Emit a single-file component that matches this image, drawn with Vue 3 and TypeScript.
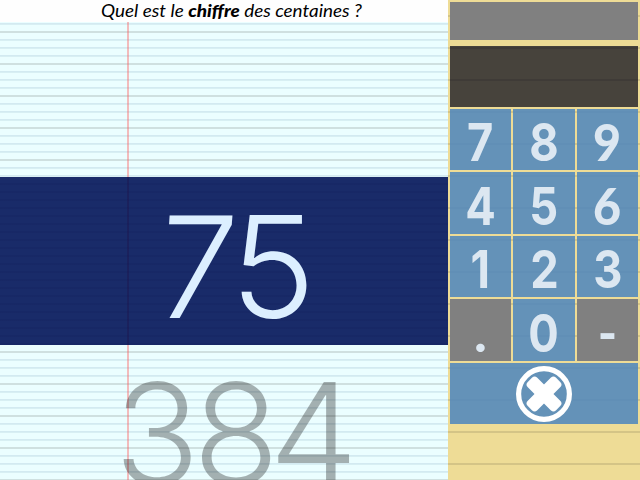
<script setup lang="ts">
interface Glyph { char: string; x: number; stretch: number; slant: number }
interface Key { label: string; disabled?: boolean; tailed?: boolean }

const current: Glyph[] = [
  { char: '7', x: 194, stretch: 0.98, slant: -4 },
  { char: '5', x: 273, stretch: 1.02, slant: 0 },
]
const upcoming: Glyph[] = [
  { char: '3', x: 157, stretch: 1, slant: 0 },
  { char: '8', x: 236, stretch: 1, slant: 0 },
  { char: '4', x: 313.5, stretch: 1, slant: 0 },
]
const keys: Key[] = [
  { label: '7' }, { label: '8' }, { label: '9', tailed: true },
  { label: '4' }, { label: '5' }, { label: '6', tailed: true },
  { label: '1' }, { label: '2' }, { label: '3' },
  { label: '.', disabled: true }, { label: '0' }, { label: '-', disabled: true },
]

function place(g: Glyph, baseline: number): string {
  return `translate(${g.x} ${baseline}) skewX(${g.slant}) scale(${g.stretch} 1)`
}
</script>

<template>
  <main class="game">
    <section class="sheet">
      <header class="question">
        <svg width="448" height="22">
          <text x="101" y="17" textLength="261" lengthAdjust="spacingAndGlyphs">Quel est le <tspan class="strong">chiffre</tspan> des centaines ?</text>
        </svg>
      </header>
      <div class="paper"></div>
      <div class="band">
        <svg width="448" height="168">
          <text v-for="g in current" :key="g.char" :transform="place(g, 140.5)">{{ g.char }}</text>
        </svg>
      </div>
      <div class="next">
        <svg width="448" height="135">
          <text v-for="g in upcoming" :key="g.char" :transform="place(g, 140)">{{ g.char }}</text>
        </svg>
      </div>
    </section>
    <aside class="panel">
      <div class="status"></div>
      <div class="entry"></div>
      <div class="keypad">
        <button v-for="k in keys" :key="k.label" class="key" :class="{ disabled: k.disabled, tailed: k.tailed }" :disabled="k.disabled">
          <span>{{ k.label }}</span>
        </button>
        <button class="key clear">
          <svg width="58" height="58" viewBox="0 0 58 58">
            <circle cx="29" cy="29" r="25.4" fill="none" stroke="#fff" stroke-width="5.2" />
            <g transform="rotate(45 29 29)" fill="#fff">
              <rect x="9" y="22.3" width="40" height="13.4" rx="3.8" />
              <rect x="22.3" y="9" width="13.4" height="40" rx="3.8" />
            </g>
          </svg>
        </button>
      </div>
    </aside>
  </main>
</template>

<style>
body { margin: 0; overflow: hidden; }
</style>

<style scoped>
.game {
  display: grid;
  grid-template-columns: 448px 192px;
  width: 640px;
  height: 480px;
  overflow: hidden;
  font-family: Lato, "Century Gothic", sans-serif;
}
svg { display: block; }
.sheet {
  position: relative;
  display: grid;
  grid-template-rows: 22px 155px 168px 135px;
  height: 480px;
  overflow: hidden;
  background: #ebfeff;
}
.sheet::before {
  content: "";
  position: absolute;
  inset: 22px 0 0;
  background:
    linear-gradient(90deg, transparent 127px, rgba(255, 80, 80, .38) 127px, rgba(255, 80, 80, .38) 129px, transparent 129px),
    repeating-linear-gradient(transparent 0 9px, #cfe0e0 9px 11px, transparent 11px 32px),
    repeating-linear-gradient(transparent 0 1px, #d3eaf1 1px 2px, #d8eff3 2px 3px, transparent 3px 8px);
}
.question { position: relative; background: #fefefe; }
.question text { font-size: 17px; font-style: italic; fill: #000; }
.question .strong { font-weight: 900; }
.band {
  position: relative;
  background:
    linear-gradient(90deg, transparent 127px, rgba(30, 15, 70, .35) 127px 129px, transparent 129px),
    repeating-linear-gradient(transparent 0 6px, rgba(0, 0, 60, .07) 6px 8px),
    #192b69;
}
.band text, .next text {
  font-family: Inter, "Century Gothic", sans-serif;
  font-size: 141px;
  font-weight: 300;
  text-anchor: middle;
}
.band text { fill: #dcefff; }
.next { position: relative; }
.next svg { opacity: .3; }
.next text { fill: #000; }
.panel {
  display: flex;
  flex-direction: column;
  box-sizing: border-box;
  height: 480px;
  padding: 2px 2px 0;
  background:
    repeating-linear-gradient(transparent 0 15px, rgba(0, 0, 0, .11) 15px 17px, transparent 17px 32px),
    #eedc96;
}
.status { height: 38px; margin-bottom: 6px; background: #808080; }
.entry { height: 61px; margin-bottom: 2px; background: rgba(0, 2, 22, .7); }
.keypad {
  display: grid;
  grid-template-columns: 61px 62px 61px;
  grid-template-rows: 61px 62px 61px 62px 61px;
  gap: 2px;
}
.key {
  display: flex;
  align-items: center;
  justify-content: center;
  margin: 0;
  padding: 0;
  border: 0;
  background: rgba(84, 137, 187, .9);
  color: #dce7f1;
  font: 700 52px/61px Inter, "Century Gothic", sans-serif;
}
.key span { display: block; transform: translateY(3px) scaleX(.87); }
.key.tailed { font-family: Lato, "Century Gothic", sans-serif; font-weight: 900; }
.key.tailed span { transform: translateY(2px) scaleX(.93); }
.key.disabled { background: #808080; font-family: Lato, "Century Gothic", sans-serif; font-weight: 900; }
.key.disabled span { transform: translateY(2px); }
.clear { grid-column: 1 / -1; }
</style>
